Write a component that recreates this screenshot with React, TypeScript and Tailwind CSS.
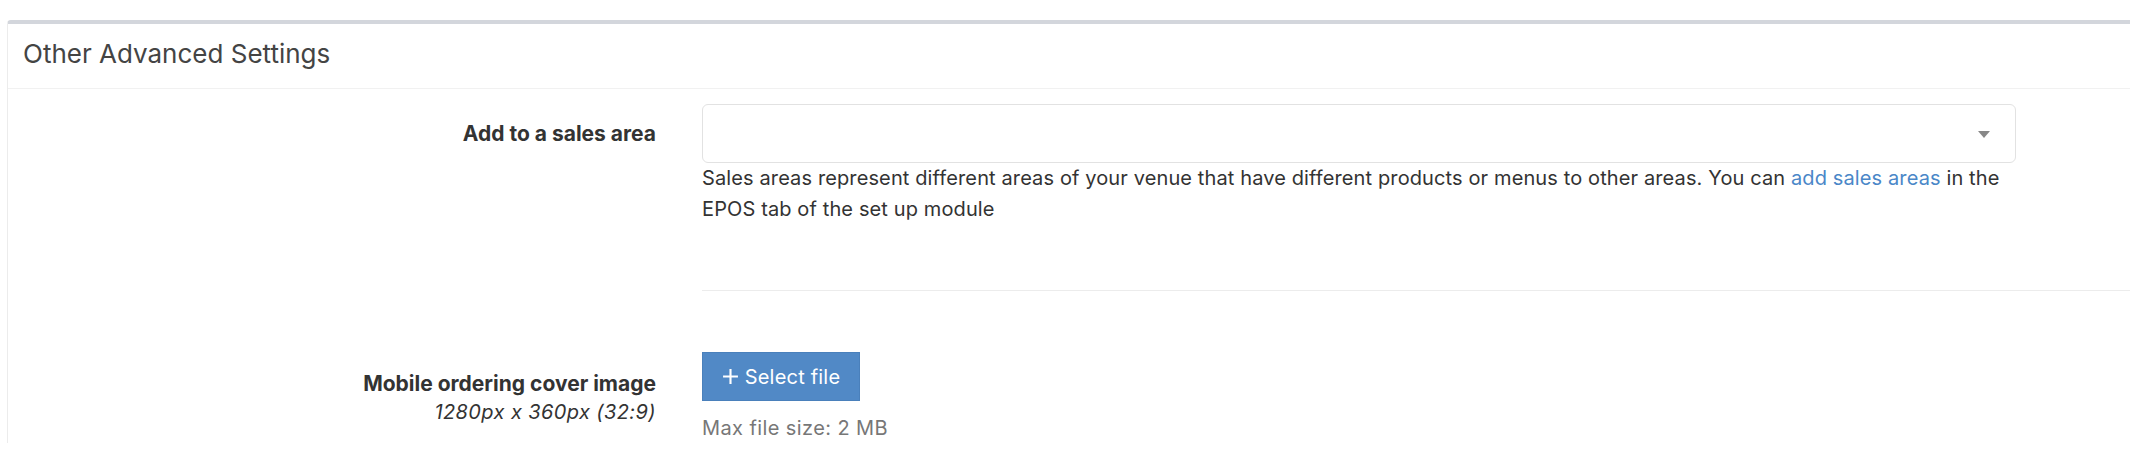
import React from "react";

export default function App() {
  return (
    <div className="min-h-[474px] bg-white pt-[20px] pl-[7px] font-['Inter',sans-serif] text-[#333]">
      <div className="bg-white border-t-4 border-t-[#d3d6dc] border-l border-l-[#ececec] rounded-tl-[4px]">
        <div className="h-[65px] flex items-center pb-[5px] pl-[15px] border-b border-b-[#f1f1f1]">
          <h3 className="text-[26px] leading-none text-[#444] font-normal">Other Advanced Settings</h3>
        </div>

        <div className="pt-[15px]">
          <div className="flex">
            <div className="w-[648px] h-[59px] flex items-center justify-end">
              <span className="text-[21px] font-bold text-[#333]">Add to a sales area</span>
            </div>
            <div className="ml-[46px] w-[1314px] flex flex-col">
              <div className="relative h-[59px] border border-[#e2e2e2] rounded-[6px] bg-white">
                <span className="absolute right-[25px] top-[26px] w-0 h-0 border-l-[6px] border-r-[6px] border-t-[7px] border-l-transparent border-r-transparent border-t-[#888]" />
              </div>
              <p className="text-[20px] tracking-[0.12px] leading-[31px] text-[#333]">
                Sales areas represent different areas of your venue that have different products or menus to other areas. You can <a className="text-[#4a87c8]">add sales areas</a> in the EPOS tab of the set up module
              </p>
            </div>
          </div>

          <div className="ml-[694px] mt-[65px] border-t border-t-[#ececec]" />

          <div className="flex mt-[61px]">
            <div className="w-[648px] pt-[17px] flex flex-col items-end">
              <span className="text-[21px] leading-[29px] font-bold text-[#333]">Mobile ordering cover image</span>
              <span className="text-[20px] tracking-[0.4px] leading-[29px] italic text-[#333]">1280px x 360px (32:9)</span>
            </div>
            <div className="ml-[46px] flex flex-col items-start">
              <button className="h-[49px] w-[158px] flex items-center justify-center gap-[6px] bg-[#5189c6] border border-[#4a80bb] text-white text-[20px] tracking-[0.2px]">
                <svg width="17" height="17" viewBox="0 0 16 16" className="shrink-0">
                  <path d="M8 1v14M1 8h14" stroke="white" strokeWidth="2" fill="none" />
                </svg>
                <span>Select file</span>
              </button>
              <span className="mt-[13px] text-[20px] tracking-[0.4px] leading-[29px] text-[#777]">Max file size: 2 MB</span>
            </div>
          </div>
        </div>
      </div>
    </div>
  );
}
